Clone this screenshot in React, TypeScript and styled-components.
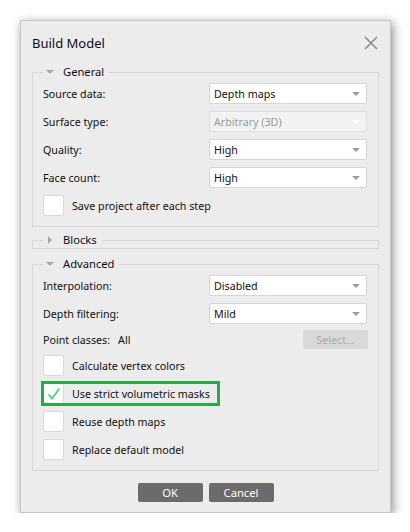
import React from 'react';
import styled, { createGlobalStyle } from 'styled-components';

const GlobalStyle = createGlobalStyle`
    html, body {
        margin: 0;
        padding: 0;
        background: #ffffff;
    }
    body {
        font-family: "Noto Sans", "Open Sans", sans-serif;
        font-size: 10.7px;
        color: #101010;
    }
`;

const Page = styled.div`
    padding: 20px 0 0 20px;
`;

const Dialog = styled.div`
    width: 371px;
    height: 493px;
    box-sizing: border-box;
    background: #ececec;
    border: 1px solid #c4c4c4;
    box-shadow: 2px 3px 10px rgba(0, 0, 0, 0.45);
    padding: 0 11px;
    display: flex;
    flex-direction: column;
`;

const TitleBar = styled.div`
    height: 43px;
    display: flex;
    align-items: center;
    justify-content: space-between;
`;

const Title = styled.h1`
    margin: 0;
    font-size: 13px;
    font-weight: 400;
    color: #0c0c1c;
`;

const CloseButton = styled.button`
    border: none;
    background: none;
    padding: 0;
    width: 14px;
    height: 14px;
    margin-right: 1px;
    display: flex;
    align-items: center;
    justify-content: center;
`;

const Group = styled.fieldset<{ $collapsed?: boolean }>`
    margin: ${({ $collapsed }) => ($collapsed ? '5px 0 7px' : '0')};
    border: 1px solid #d6d6d6;
    padding: ${({ $collapsed }) => ($collapsed ? '0 11px 0 10px' : '3px 11px 10px 10px')};
    min-width: 0;
    display: flex;
    flex-direction: column;
    gap: 7px;
`;

const Legend = styled.legend`
    margin-left: 0;
    padding: 0 5px 0 3px;
    line-height: 16px;
    height: 16px;
    display: flex;
    align-items: center;
    gap: 9px;
    font-size: 11.2px;
    color: #0c0c1c;
`;

const Row = styled.div`
    display: grid;
    grid-template-columns: 1fr 158px;
    align-items: center;
    height: 21px;
`;

const Label = styled.span`
    white-space: nowrap;
`;

const Combo = styled.div<{ $disabled?: boolean }>`
    height: 21px;
    box-sizing: border-box;
    border: 1px solid ${({ $disabled }) => ($disabled ? '#dedede' : '#d4d4d4')};
    border-radius: 2px;
    background: ${({ $disabled }) => ($disabled ? '#f2f2f2' : '#ffffff')};
    color: ${({ $disabled }) => ($disabled ? '#9a9a9a' : '#101010')};
    display: flex;
    align-items: center;
    justify-content: space-between;
    padding: 0 6px 0 4px;
`;

const Arrow = styled.span<{ $color: string }>`
    width: 0;
    height: 0;
    border-left: 4px solid transparent;
    border-right: 4px solid transparent;
    border-top: 4px solid ${({ $color }) => $color};
`;

const SideArrow = styled.span`
    width: 0;
    height: 0;
    border-top: 4px solid transparent;
    border-bottom: 4px solid transparent;
    border-left: 4px solid #a8a8a8;
    margin: 0 2px;
`;

const PointRow = styled.div`
    display: flex;
    align-items: center;
    height: 17px;
`;

const PointValue = styled.span`
    margin-left: 8px;
    flex: 1;
`;

const SelectButton = styled.button`
    width: 65px;
    height: 19px;
    margin-right: -1px;
    border: none;
    border-radius: 2px;
    background: #d9d9d9;
    color: #a9a9a9;
    font: inherit;
    padding: 0;
`;

const CheckRow = styled.label<{ $highlight?: boolean }>`
    display: flex;
    align-items: center;
    gap: 8px;
    height: 21px;
    align-self: flex-start;
    padding-right: ${({ $highlight }) => ($highlight ? '8px' : '0')};
    outline: ${({ $highlight }) => ($highlight ? '3px solid #2aa84a' : 'none')};
    outline-offset: -1px;
`;

const Box = styled.span`
    width: 21px;
    height: 21px;
    box-sizing: border-box;
    border: 1px solid #d8d8d8;
    border-radius: 2px;
    background: #ffffff;
    display: flex;
    align-items: center;
    justify-content: center;
`;

const Footer = styled.div`
    display: flex;
    justify-content: center;
    gap: 6px;
    margin-top: 12px;
`;

const PushButton = styled.button`
    width: 65px;
    height: 19px;
    border: none;
    border-radius: 2px;
    background: #6b6b6b;
    color: #ffffff;
    font: inherit;
    font-size: 11.2px;
    padding: 0;
`;

const Select = ({ value, disabled }: { value: string; disabled?: boolean }) => (
    <Combo $disabled={disabled}>
        {value}
        <Arrow $color={disabled ? '#ffffff' : '#9c9c9c'} />
    </Combo>
);

const Check = ({ label, checked, highlight }: { label: string; checked?: boolean; highlight?: boolean }) => (
    <CheckRow $highlight={highlight}>
        <Box>
            {checked && (
                <svg width="14" height="14" viewBox="0 0 14 14">
                    <path d="M1.5 7.5 L5 11.5 L12.5 1.5" fill="none" stroke="#4fd277" strokeWidth="1.8" />
                </svg>
            )}
        </Box>
        {label}
    </CheckRow>
);

const App = () => {
    return (
        <Page>
            <GlobalStyle />
            <Dialog>
                <TitleBar>
                    <Title>Build Model</Title>
                    <CloseButton>
                        <svg width="14" height="14" viewBox="0 0 14 14">
                            <path d="M1 1 L13 13 M13 1 L1 13" stroke="#8c8c8c" strokeWidth="1.6" />
                        </svg>
                    </CloseButton>
                </TitleBar>

                <Group>
                    <Legend>
                        <Arrow $color="#a8a8a8" />
                        General
                    </Legend>
                    <Row>
                        <Label>Source data:</Label>
                        <Select value="Depth maps" />
                    </Row>
                    <Row>
                        <Label>Surface type:</Label>
                        <Select value="Arbitrary (3D)" disabled />
                    </Row>
                    <Row>
                        <Label>Quality:</Label>
                        <Select value="High" />
                    </Row>
                    <Row>
                        <Label>Face count:</Label>
                        <Select value="High" />
                    </Row>
                    <Check label="Save project after each step" />
                </Group>

                <Group $collapsed>
                    <Legend>
                        <SideArrow />
                        Blocks
                    </Legend>
                </Group>

                <Group>
                    <Legend>
                        <Arrow $color="#a8a8a8" />
                        Advanced
                    </Legend>
                    <Row>
                        <Label>Interpolation:</Label>
                        <Select value="Disabled" />
                    </Row>
                    <Row>
                        <Label>Depth filtering:</Label>
                        <Select value="Mild" />
                    </Row>
                    <PointRow>
                        <Label>Point classes:</Label>
                        <PointValue>All</PointValue>
                        <SelectButton>Select...</SelectButton>
                    </PointRow>
                    <Check label="Calculate vertex colors" />
                    <Check label="Use strict volumetric masks" checked highlight />
                    <Check label="Reuse depth maps" />
                    <Check label="Replace default model" />
                </Group>

                <Footer>
                    <PushButton>OK</PushButton>
                    <PushButton>Cancel</PushButton>
                </Footer>
            </Dialog>
        </Page>
    );
};

export default App;
